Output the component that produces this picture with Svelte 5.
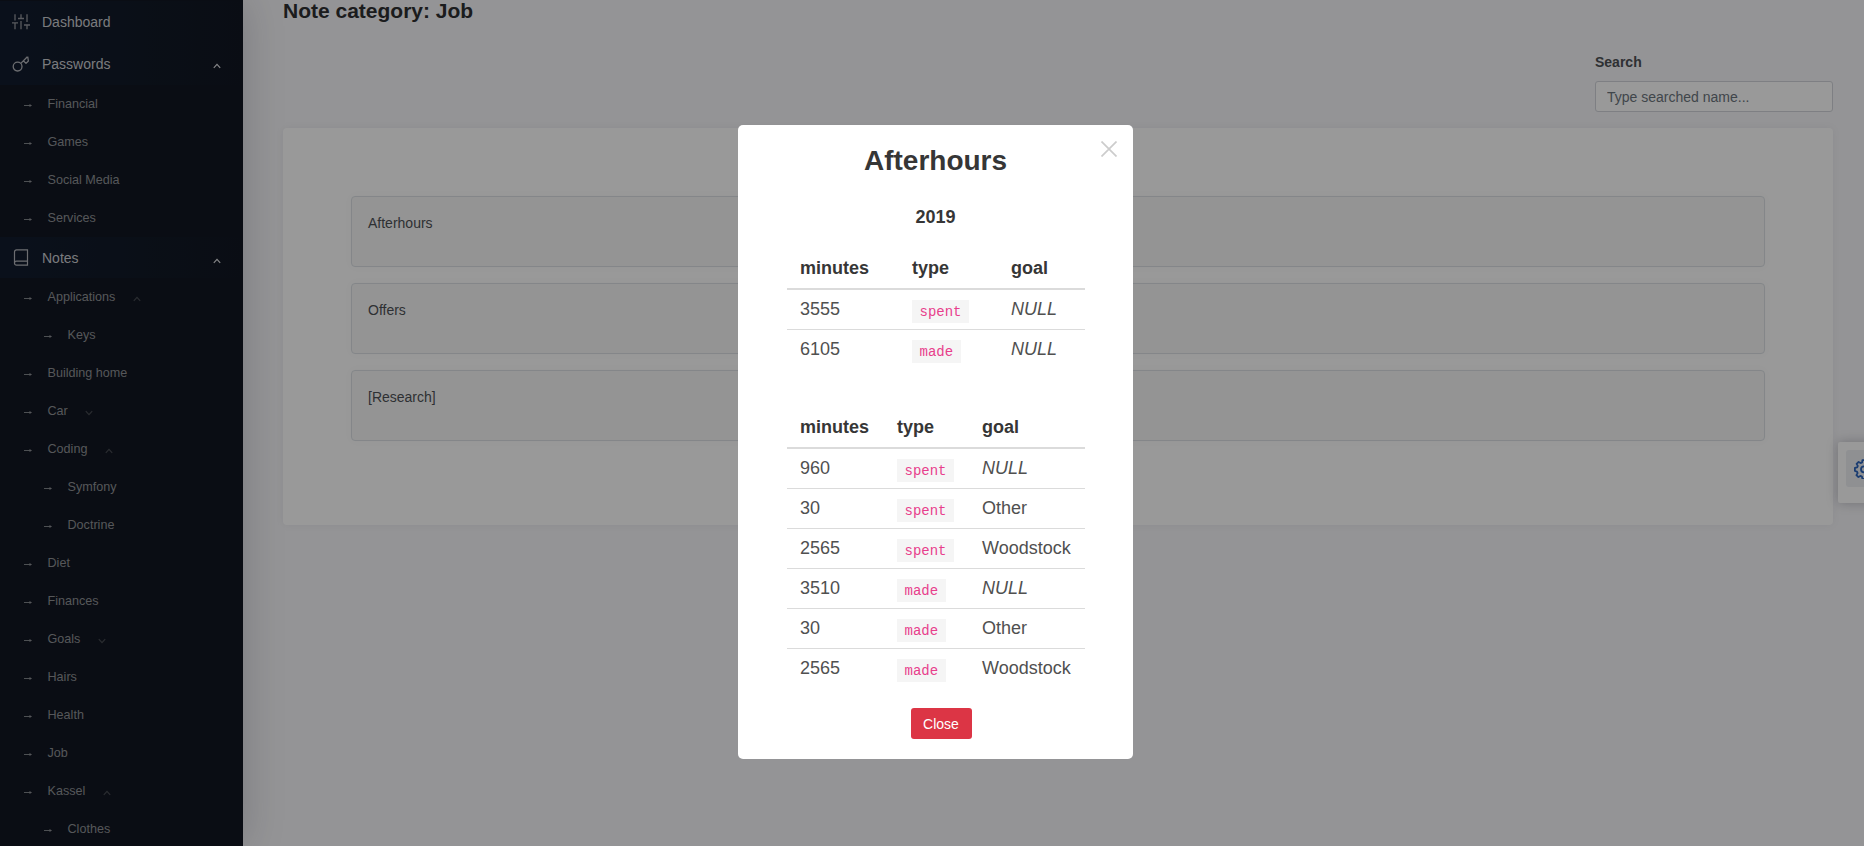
<script>
  const passwords = ['Financial', 'Games', 'Social Media', 'Services'];
  const notes = [
    { name: 'Applications', caret: 'up' },
    { name: 'Keys', child: true },
    { name: 'Building home' },
    { name: 'Car', caret: 'down' },
    { name: 'Coding', caret: 'up' },
    { name: 'Symfony', child: true },
    { name: 'Doctrine', child: true },
    { name: 'Diet' },
    { name: 'Finances' },
    { name: 'Goals', caret: 'down' },
    { name: 'Hairs' },
    { name: 'Health' },
    { name: 'Job' },
    { name: 'Kassel', caret: 'up' },
    { name: 'Clothes', child: true }
  ];
  const cards = ['Afterhours', 'Offers', '[Research]'];
  const summary = [
    ['3555', 'spent', null],
    ['6105', 'made', null]
  ];
  const details = [
    ['960', 'spent', null],
    ['30', 'spent', 'Other'],
    ['2565', 'spent', 'Woodstock'],
    ['3510', 'made', null],
    ['30', 'made', 'Other'],
    ['2565', 'made', 'Woodstock']
  ];
</script>

{#snippet caret(dir)}
  <svg class="caret" width="8" height="6" viewBox="0 0 8 6" fill="none" stroke="currentColor" stroke-width="1.2">
    {#if dir === 'up'}<path d="M.8 4.8 4 1.4l3.2 3.4" />{:else}<path d="M.8 1.2 4 4.6l3.2-3.4" />{/if}
  </svg>
{/snippet}

{#snippet arrow()}
  <svg class="arrow" width="8" height="5" viewBox="0 0 8 5">
    <path d="M0 2.5h7" stroke="currentColor" stroke-width=".9" />
    <path d="M5.5 1 8 2.5 5.5 4z" fill="currentColor" />
  </svg>
{/snippet}

{#snippet sheet(rows, kind)}
  <table class={kind}>
    <thead><tr><th class="minutes">minutes</th><th class="type">type</th><th>goal</th></tr></thead>
    <tbody>
      {#each rows as row}
        <tr>
          <td>{row[0]}</td>
          <td><code>{row[1]}</code></td>
          <td>{#if row[2]}{row[2]}{:else}<em>NULL</em>{/if}</td>
        </tr>
      {/each}
    </tbody>
  </table>
{/snippet}

<div class="page">
  <nav class="sidebar">
    <div class="top">
      <svg class="icon dim" width="18" height="18" viewBox="0 0 18 18" fill="none" stroke="currentColor" stroke-width="1.3">
        <path d="M3 1.3v6.2M3 9.8v6.4M0 9.8h6M9 1.3v4.2M9 8v8.2M6 5.5h6M15 1.3v7.7M15 12v4.2M12 12h6" />
      </svg>
      <span>Dashboard</span>
    </div>
    <div class="top">
      <svg class="icon" width="18" height="18" viewBox="0 0 18 18" fill="none" stroke="currentColor" stroke-width="1.3" stroke-linejoin="round">
        <circle cx="5.6" cy="11.6" r="4.4" /><path d="m8.8 8.4 6.6-6.6M11.4 5.8l2.6 2.6 2.4-2.4-.7-4.4" />
      </svg>
      <span>Passwords</span>{@render caret('up')}
    </div>
    {#each passwords as name}
      <div class="sub">{@render arrow()}<span>{name}</span></div>
    {/each}
    <div class="top notes">
      <svg class="icon" width="18" height="18" viewBox="0 0 18 18" fill="none" stroke="currentColor" stroke-width="1.2">
        <path d="M15.5 12.2v4h-11a2 2 0 0 1 0-4h11V.9h-11a2 2 0 0 0-2 2v11.3" />
      </svg>
      <span>Notes</span>{@render caret('up')}
    </div>
    {#each notes as item}
      <div class="sub" class:child={item.child}>
        {@render arrow()}<span>{item.name}</span>
        {#if item.caret}{@render caret(item.caret)}{/if}
      </div>
    {/each}
  </nav>

  <main>
    <h1>Note category: Job</h1>
    <div class="search">
      <label for="search">Search</label>
      <input id="search" placeholder="Type searched name..." />
    </div>
    <section class="panel">
      {#each cards as card}
        <article>{card}</article>
      {/each}
    </section>
  </main>

  <aside class="settings">
    <div>
      <svg width="20" height="20" viewBox="0 0 20 20" fill="none" stroke="#2e66bd" stroke-width="1.8" stroke-linejoin="round">
        <path d="M8.4 1.2h3.2l.5 2.3 1.5.6 2-1.2 2 2-1.2 2 .6 1.5 2.3.5v3.2l-2.3.5-.6 1.5 1.2 2-2 2-2-1.2-1.5.6-.5 2.3H8.4l-.5-2.3-1.5-.6-2 1.2-2-2 1.2-2-.6-1.5L.9 12V8.9l2.3-.5.6-1.5-1.2-2 2-2 2 1.2 1.5-.6z" />
        <circle cx="10" cy="10.3" r="3" />
      </svg>
    </div>
  </aside>

  <div class="overlay">
    <div class="modal">
      <button class="dismiss" aria-label="Close dialog">
        <svg width="16" height="16" viewBox="0 0 16 16" stroke="#ccc" stroke-width="1.7"><path d="m.5.5 15 15M15.5.5l-15 15" /></svg>
      </button>
      <h2>Afterhours</h2>
      <h3>2019</h3>
      {@render sheet(summary, 'summary')}
      {@render sheet(details, 'details')}
      <button class="close">Close</button>
    </div>
  </div>
</div>

<style>
  :global(body) { overflow: hidden; }
  .page, .page * { box-sizing: border-box; }
  .page {
    position: relative;
    display: flex;
    width: 1864px;
    height: 846px;
    overflow: hidden;
    background: #f7f7fa;
    color: #4e5155;
    font: 14px "Liberation Sans", Arial, sans-serif;
  }
  .sidebar {
    flex: 0 0 243px;
    padding-top: 1.3px;
    background: #121722;
    box-shadow: 0 0 40px rgba(30, 30, 50, .2);
    overflow: hidden;
  }
  .top {
    display: flex;
    align-items: center;
    height: 41.7px;
    padding: 0 22px 0 12px;
    background: linear-gradient(90deg, #121c2e, #121722);
    color: #cbcdd1;
  }
  .top.notes { padding-top: 1px; }
  .top .icon { margin-right: 12px; color: #b4b6bc; }
  .top .icon.dim { color: #94979e; }
  .top .caret { margin: 5px 0 0 auto; color: #dfe0e4; }
  .sub {
    display: flex;
    align-items: center;
    height: 38px;
    padding-left: 23.5px;
    color: #8f9296;
    font-size: 12.6px;
  }
  .sub.child { padding-left: 43.5px; }
  .sub .arrow { margin: 3px 16px 0 0; }
  .sub .caret { margin: 4px 0 0 17.5px; color: #474a52; }
  main {
    flex: 1;
    display: flex;
    flex-direction: column;
    padding: 0 31px 0 40px;
  }
  h1 { margin: -2px 0 0; color: #2e2f31; font-size: 21px; line-height: 25px; }
  .search { align-self: flex-end; display: flex; flex-direction: column; width: 238px; margin-top: 30px; }
  label { font-weight: bold; line-height: 18px; }
  input {
    height: 31px;
    margin-top: 10px;
    padding: 0 11px;
    border: 1px solid #d2d4da;
    border-radius: 3px;
    background: #fff;
    font: inherit;
  }
  input::placeholder { color: #6c757d; opacity: 1; }
  .panel {
    display: flex;
    flex-direction: column;
    gap: 16px;
    height: 397px;
    margin-top: 16px;
    padding: 68px;
    border-radius: 4px;
    background: #fff;
    box-shadow: 0 0 8px rgba(30, 35, 60, .06);
  }
  article {
    height: 71px;
    padding: 18px 16px;
    border: 1px solid #dce0e5;
    border-radius: 4px;
    background: #f7f7f7;
    box-shadow: 0 0 8px rgba(0, 0, 0, .03);
  }
  .settings {
    position: absolute;
    top: 442px;
    left: 1838px;
    width: 60px;
    height: 61px;
    padding: 8px;
    border-radius: 2px;
    background: #fff;
    box-shadow: 0 0 12px rgba(20, 20, 40, .25);
  }
  .settings div { display: flex; align-items: center; height: 37px; padding-left: 8px; border-radius: 3px; background: #eef0f4; }
  .settings svg { flex: none; }
  .overlay {
    position: absolute;
    inset: 0;
    background: rgba(0, 0, 0, .4);
  }
  .modal {
    position: absolute;
    top: 125px;
    left: 738px;
    display: flex;
    flex-direction: column;
    width: 395px;
    height: 634px;
    padding: 0 48px 0 49px;
    border-radius: 5px;
    background: #fff;
  }
  .dismiss { position: absolute; top: 16px; right: 16px; display: flex; padding: 0; border: 0; background: none; }
  h2 { margin: 20px 0 0 -1px; color: #363636; font-size: 28px; line-height: 32px; text-align: center; }
  h3 { margin: 29px 0 0 -1px; color: #363636; font-size: 18px; line-height: 22px; text-align: center; }
  table { width: 298px; border-collapse: separate; border-spacing: 0; table-layout: fixed; font-size: 18px; }
  .summary { margin-top: 21px; }
  .details { margin-top: 38px; }
  th { height: 41px; padding: 0 0 1px 13px; border-bottom: 2px solid #dbdbdb; color: #363636; text-align: left; }
  td { height: 40px; padding: 0 0 2px 13px; border-bottom: 1px solid #dbdbdb; color: #505050; line-height: 20px; white-space: nowrap; }
  tbody tr:last-child td { border-bottom-color: transparent; }
  .summary .minutes { width: 112px; }
  .summary .type { width: 99px; }
  .details .minutes { width: 97px; }
  .details .type { width: 85px; }
  code {
    position: relative;
    top: 1px;
    padding: 3.5px 7.9px 3.5px 7.5px;
    background: #f5f5f5;
    color: #e83e8c;
    font: 14px "Liberation Mono", monospace;
  }
  .close {
    align-self: center;
    width: 61px;
    height: 31px;
    margin: 19px 0 0 10px;
    padding: 0;
    border: 0;
    border-radius: 3px;
    background: #dc3545;
    color: #fff;
    font: inherit;
  }
</style>
